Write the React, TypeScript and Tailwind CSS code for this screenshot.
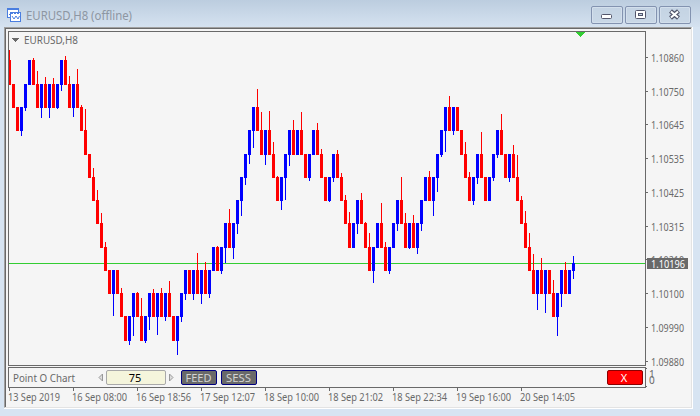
import * as React from 'react'

// top edge of every price step on the chart
const LEVELS = [60, 84, 107, 130, 154, 177, 200, 223, 247, 270, 293, 316, 340]

// one entry per brick: colour, step, wick end (0 = no wick)
const BRICKS = `
R0:50 R1:0 R2:0 B2:136 B1:111 B0:0 R0:58 R1:71 B1:118 R1:77 B1:118 R1:78 B1:109 B0:91 R0:56 R1:76
B1:117 R1:69 R2:105 R3:109 R4:0 R5:168 R6:190 R7:213 R8:242 R9:0 B9:316 R9:0 R10:288 R11:0 B11:345
B10:336 R10:292 R11:298 B11:343 B10:330 R10:289 B10:335 R10:288 B10:321 R10:281 R11:0 B11:355 B10:322
B9:300 R9:0 B9:300 R9:253 B9:304 R9:262 B9:298 B8:0 R8:246 B8:274 B7:263 R7:209 B7:259 B6:234 B5:216
B4:185 B3:164 B2:148 R2:89 R3:112 B3:165 R3:111 R4:142 R5:176 B5:210 B4:200 B3:166 R3:120 B3:0 R3:112
R4:0 B4:181 B3:0 R3:123 R4:149 R5:0 B5:202 B4:182 R4:150 R5:173 R6:195 R7:212 B7:0 B6:234 R6:193
R7:222 R8:233 B8:283 B7:0 R7:203 R8:242 B8:274 B7:0 B6:231 R6:177 R7:213 B7:249 R7:215 B7:254 B6:231
B5:0 R5:171 B5:216 B4:192 B3:157 B2:152 R2:96 B2:135 R2:0 R3:0 R4:142 R5:172 B5:205 B4:184 R4:132
R5:0 B5:0 B4:181 B3:158 R3:114 R4:0 B4:182 R4:145 R5:155 R6:196 R7:211 R8:233 R9:254 B9:310 R9:258
B9:313 R9:0 R10:280 B10:336 B9:307 R9:262 B9:0`
  .trim()
  .split(/\s+/)
  .map((s) => {
    const [step, wick] = s.slice(1).split(':').map(Number)
    return { up: s[0] === 'B', step, wick }
  })

const PRICES: [string, number][] = [
  ['1.10860', 57],
  ['1.10750', 91],
  ['1.10645', 124],
  ['1.10535', 158],
  ['1.10425', 192],
  ['1.10315', 226],
  ['1.10210', 259],
  ['1.10100', 293],
  ['1.09990', 327],
  ['1.09880', 361],
]

const TIMES: [string, number][] = [
  ['13 Sep 2019', 52],
  ['16 Sep 08:00', 55],
  ['16 Sep 18:56', 55],
  ['17 Sep 12:07', 55],
  ['18 Sep 10:00', 55],
  ['18 Sep 21:02', 55],
  ['18 Sep 22:34', 55],
  ['19 Sep 16:00', 55],
  ['20 Sep 14:05', 55],
]

const App: React.FC = () => {
  return (
    <div className="flex h-[416px] w-[700px] flex-col overflow-hidden bg-[#d7e4f2] font-['Noto_Sans','Open_Sans',sans-serif]">
      <TitleBar />
      <div className="ml-1 h-[382px] w-[689px] border-r border-b border-white">
        <div className="h-[381px] border-t border-r border-b border-l border-t-[#a0a0a0] border-r-[#e3e3e3] border-b-[#e3e3e3] border-l-[#a0a0a0] bg-[#f5f5f5]">
          <div className="flex h-[379px] flex-col border-t border-l border-[#696969]">
            <Chart />
            <ControlPanel />
            <TimeAxis />
          </div>
        </div>
      </div>
    </div>
  )
}

export default App

const TitleBar: React.FC = () => {
  return (
    <div className="flex h-[27px] shrink-0 bg-linear-to-b from-[#bccddf] to-[#d5e2f0] pl-[7px]">
      <svg width="16" height="16" className="mt-[7px]" shapeRendering="crispEdges">
        <rect x="0.5" y="1.5" width="11" height="9" rx="1" fill="#fff" stroke="#4a7ee0" />
        <path d="M1 2.5h10" stroke="#4a7ee0" />
        <path d="M2 7.5h1v-2h1v2h1" stroke="#4a7ee0" fill="none" />
        <rect x="3.5" y="5.5" width="10" height="9" rx="1" fill="#fff" stroke="#4a7ee0" />
        <path d="M4 6.5h9" stroke="#4a7ee0" strokeDasharray="2 1" />
        <path d="M5 9l2 3 2-3 2 3 1.5-3" stroke="#4a7ee0" fill="none" shapeRendering="auto" />
      </svg>
      <svg width="112" height="27" className="ml-[3px] overflow-visible">
        <text x="0" y="20" fontSize="12.5" fill="#8d96a2" textLength="106" lengthAdjust="spacingAndGlyphs">
          EURUSD,H8 (offline)
        </text>
      </svg>
      <div className="mt-1.5 ml-auto flex gap-0.5 pr-[9px]">
        <WindowButton>
          <rect x="9.5" y="7.5" width="10" height="4" rx="1" fill="#fff" stroke="#53566b" />
        </WindowButton>
        <WindowButton>
          <rect x="9.5" y="3.5" width="10" height="8" rx="1" fill="#fff" stroke="#53566b" />
          <rect x="12.5" y="6.5" width="4" height="2" fill="#c5d3e3" stroke="#53566b" />
        </WindowButton>
        <WindowButton>
          <path d="M10.5 4l8 7m0-7l-8 7" stroke="#53566b" strokeWidth="4.4" />
          <path d="M11 4.4l7 6.2m0-6.2l-7 6.2" stroke="#fff" strokeWidth="2" />
        </WindowButton>
      </div>
    </div>
  )
}

const WindowButton: React.FC<{ children: React.ReactNode }> = ({ children }) => {
  return (
    <button className="h-[18px] w-8 rounded-[2px] border border-[#8393b0] bg-[#c5d3e3]/60 shadow-[inset_0_0_0_1px_#d3dfec]">
      <svg width="30" height="16">
        {children}
      </svg>
    </button>
  )
}

const Chart: React.FC = () => {
  return (
    <svg
      width="685"
      height="338"
      viewBox="6 29 685 338"
      className="shrink-0 overflow-visible"
      shapeRendering="crispEdges"
    >
      <rect x="8.5" y="31.5" width="637" height="334" fill="none" stroke="#696969" />
      <rect x="9" y="263" width="636" height="1" fill="#32cd32" />
      <svg x="9" y="32" width="636" height="333" viewBox="9 32 636 333">
        {BRICKS.map(({ up, step, wick }, i) => {
          const x = 8 + i * 4
          const top = LEVELS[step]
          const bottom = LEVELS[step + 1] + 1
          return (
            <g key={i} fill={up ? '#00f' : '#f00'}>
              <rect x={x} y={top} width="3" height={bottom - top} />
              {wick > 0 && (
                <rect
                  x={x + 1}
                  y={up ? bottom : wick}
                  width="1"
                  height={up ? wick - bottom : top - wick}
                />
              )}
            </g>
          )
        })}
        <path d="M572 263h3v8h-3zM573 256h1v23h-1z" fill="#00f" />
      </svg>
      <path d="M576 32h9v1h-1v1h-1v1h-1v1h-1v1h-1v-1h-1v-1h-1v-1h-1v-1h-1z" fill="#32cd32" />
      <path d="M12 38h7v1h-1v1h-1v1h-1v1h-1v-1h-1v-1h-1v-1h-1z" fill="#696969" />
      <text x="24" y="43.5" fontSize="10.5" fill="#696969" textLength="54" lengthAdjust="spacingAndGlyphs">
        EURUSD,H8
      </text>
      {PRICES.map(([label, y]) => (
        <g key={label} fill="#696969">
          <rect x="646" y={y} width="2" height="1" />
          <text x="651" y={y + 4.5} fontSize="10.5" textLength="33" lengthAdjust="spacingAndGlyphs">
            {label}
          </text>
        </g>
      ))}
      <rect x="647" y="258" width="41" height="11" fill="#696969" />
      <text x="651" y="268" fontSize="10.5" fill="#fff" textLength="34" lengthAdjust="spacingAndGlyphs">
        1.10196
      </text>
    </svg>
  )
}

const ControlPanel: React.FC = () => {
  return (
    <div className="flex h-[21px] shrink-0 pl-0.5">
      <div className="flex w-[638px] border border-[#696969] px-1 pt-0.5 pr-0.5">
        <svg width="93" height="15">
          <text x="0" y="11.5" fontSize="10.5" fill="#696969" textLength="62" lengthAdjust="spacingAndGlyphs">
            Point O Chart
          </text>
          <path d="M89.5 4v7l-3.5-3.5z" fill="#ddd" stroke="#999" />
        </svg>
        <div className="h-[15px] w-[60px] rounded-[2px] border border-[#a9a9a9] bg-[#f5f5dc] pr-0.5 text-center text-[11px] leading-[13px] text-black">
          75
        </div>
        <svg width="15" height="15">
          <path d="M3.5 4v7l3.5-3.5z" fill="#ddd" stroke="#999" />
        </svg>
        <button className="h-[15px] w-9 rounded-[2px] border border-[#000080] bg-[#696969]">
          <svg width="34" height="13" className="block">
            <text x="3.5" y="10.5" fontSize="11" fill="#d3d3d3" textLength="26" lengthAdjust="spacingAndGlyphs">
              FEED
            </text>
          </svg>
        </button>
        <button className="ml-1 h-[15px] w-9 rounded-[2px] border border-[#000080] bg-[#696969]">
          <svg width="34" height="13" className="block">
            <text x="4" y="10.5" fontSize="11" fill="#d3d3d3" textLength="25" lengthAdjust="spacingAndGlyphs">
              SESS
            </text>
          </svg>
        </button>
        <button className="ml-auto h-[15px] w-9 rounded-[2px] border border-[#8b0000] bg-[#f00] pr-0.5 text-center text-[11px] leading-[13px] text-white">
          X
        </button>
      </div>
      <svg width="12" height="21" fill="#696969" className="overflow-visible">
        <path d="M0 1h1v1h-1zM0 19h1v1h-1z" />
        <text x="3" y="11" fontSize="10">
          1
        </text>
        <text x="3" y="17" fontSize="10">
          0
        </text>
      </svg>
    </div>
  )
}

const TimeAxis: React.FC = () => {
  return (
    <svg width="685" height="19" viewBox="6 388 685 19" className="shrink-0">
      {TIMES.map(([label, width], i) => (
        <g key={label} fill="#696969">
          <rect x={9 + i * 64} y="388" width="1" height="3" />
          <text x={8 + i * 64} y="400.5" fontSize="10.5" textLength={width} lengthAdjust="spacingAndGlyphs">
            {label}
          </text>
        </g>
      ))}
    </svg>
  )
}
